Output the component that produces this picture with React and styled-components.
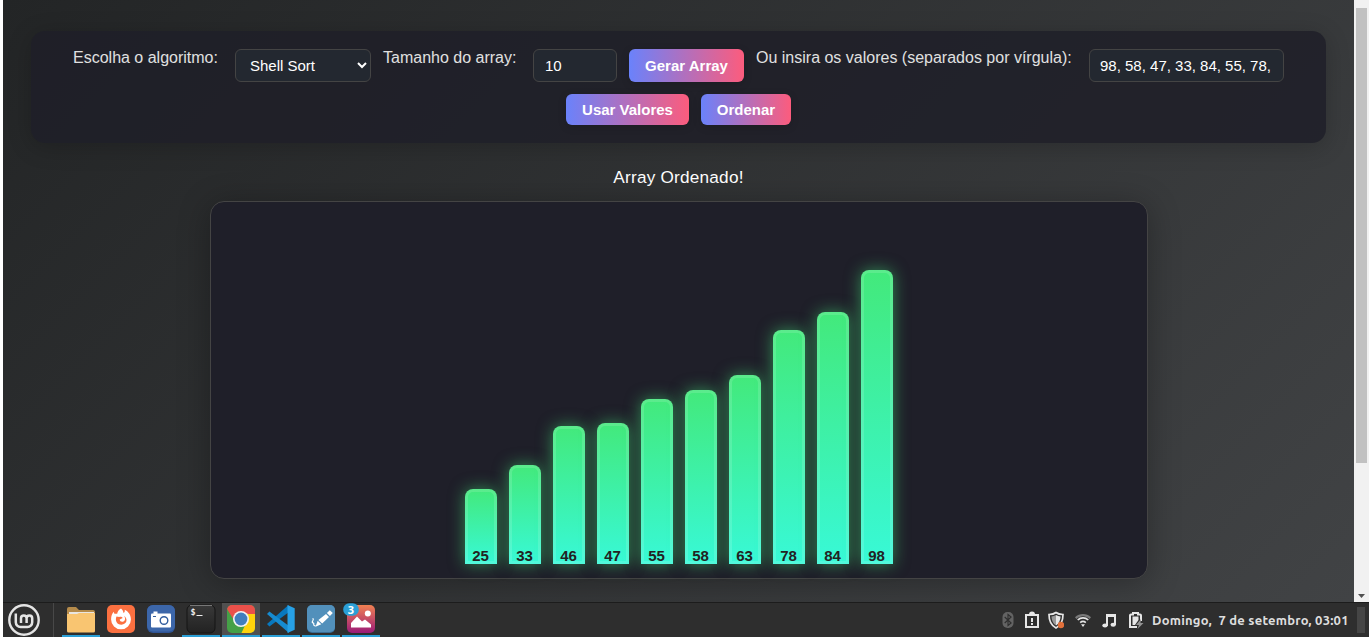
import React from "react";
import styled, { createGlobalStyle } from "styled-components";

const GlobalStyle = createGlobalStyle`
  *, *::before, *::after { box-sizing: border-box; }
  body {
    margin: 0;
    background: #fff;
    overflow: hidden;
    font-family: "Liberation Sans", Arial, sans-serif;
  }
`;

const Desktop = styled.div`
  display: flex;
  flex-direction: column;
  height: 637px;
  padding-left: 3px;
  overflow: hidden;
`;

const Browser = styled.div`
  display: flex;
  height: 602px;
`;

const Page = styled.main`
  flex: 1;
  display: flex;
  flex-direction: column;
  align-items: center;
  padding: 31px 28px 0;
  overflow: hidden;
  background: linear-gradient(135deg, #232526, #414345) 0 0 / 100% 602px;
`;

const Controls = styled.section`
  display: flex;
  flex-wrap: wrap;
  justify-content: center;
  gap: 12px;
  width: 1295px;
  height: 112px;
  padding: 18px 24px;
  border-radius: 14px;
  background: rgba(30, 30, 40, 0.85);
  box-shadow: 0 4px 24px rgba(0, 0, 0, 0.2);
`;

const Label = styled.label`
  width: ${(p) => p.$width}px;
  margin-right: 5px;
  color: #e0e0e0;
  font-size: 16px;
  line-height: 18px;
  white-space: nowrap;
`;

const fieldLook = `
  height: 33px;
  border: 1px solid #444;
  border-radius: 6px;
  background: #232830;
  color: #fff;
  font: 15px "Liberation Sans", Arial, sans-serif;
  outline: none;
`;

const Select = styled.select`
  ${fieldLook}
  width: 136px;
  padding: 0 0 0 10px;
`;

const Input = styled.input`
  ${fieldLook}
  width: ${(p) => p.$width}px;
  padding: 0 10px 0 ${(p) => p.$inset || 10}px;
`;

const Button = styled.button`
  width: ${(p) => p.$width}px;
  height: ${(p) => p.$height || 31}px;
  padding: 0;
  border: 0;
  border-radius: 6px;
  background: linear-gradient(90deg, #6a82fb, #fc5c7d);
  box-shadow: 0 2px 8px rgba(0, 0, 0, 0.15);
  color: #fff;
  font: bold 15px "Liberation Sans", Arial, sans-serif;
`;

const Status = styled.p`
  margin: 24px 0 14px;
  color: #fff;
  font-size: 17.2px;
  letter-spacing: 0.22px;
  line-height: 20px;
`;

const Chart = styled.section`
  display: flex;
  justify-content: center;
  align-items: flex-end;
  gap: 12px;
  width: 938px;
  height: 378px;
  flex-shrink: 0;
  padding-bottom: 14px;
  border: 1px solid #444;
  border-radius: 14px;
  background: #1f1f29;
  box-shadow: 0 4px 32px rgba(0, 0, 0, 0.3);
`;

const Bar = styled.div`
  display: flex;
  justify-content: center;
  align-items: flex-end;
  width: 32px;
  height: ${(p) => p.$value * 3}px;
  border-radius: 8px 8px 0 0;
  background: linear-gradient(180deg, #43e97b, #38f9d7);
  box-shadow: 0 0 16px rgba(67, 233, 123, 0.53), inset 0 0 0 3px rgba(255, 255, 255, 0.13);
  color: #222;
  font-size: 15px;
  font-weight: bold;
  line-height: 17px;
`;

const ScrollTrack = styled.div`
  display: flex;
  flex-direction: column;
  justify-content: space-between;
  align-items: center;
  width: 15px;
  padding: 8px 0 4px;
  background: #f1f1f1;
`;

const ScrollThumb = styled.div`
  width: 11px;
  height: 455px;
  background: #c1c1c1;
`;

const Taskbar = styled.footer`
  display: flex;
  height: 35px;
  border-top: 1px solid #1c1c1c;
  background: #2e2e2e;
`;

const Menu = styled.div`
  display: flex;
  align-items: center;
  width: 51px;
  padding: 0 0 0 5px;
  border-right: 1px solid #484848;
`;

const Apps = styled.nav`
  display: flex;
  gap: 2px;
  margin-left: 8px;
`;

const TaskItem = styled.div`
  display: flex;
  justify-content: center;
  width: 38px;
  padding-top: 1px;
  border-bottom: 2px solid ${(p) => (p.$open ? "#2a9fd6" : "transparent")};
  background: ${(p) => (p.$active ? "#505050" : "transparent")};
  background-clip: padding-box;
`;

const Tray = styled.div`
  display: flex;
  align-items: center;
  margin-left: auto;
`;

const TrayIcon = styled.svg`
  width: 16px;
  height: 18px;
  margin-right: ${(p) => p.$gap}px;
`;

const Clock = styled.time`
  width: 205px;
  color: #dedede;
  font: bold 13px Ubuntu, "Noto Sans", sans-serif;
  letter-spacing: 0.22px;
  white-space: pre;
`;

const ShowDesktop = styled.div`
  width: 8px;
  height: 26px;
  margin-right: 4px;
  background: #454545;
`;

const IconSvg = styled.svg`
  width: 30px;
  height: 30px;
  flex-shrink: 0;
  overflow: visible;
`;

const AppIcon = ({ children }) => <IconSvg viewBox="0 0 30 30">{children}</IconSvg>;

const MintLogo = () => (
  <svg width="32" height="32" viewBox="0 0 32 32" fill="none" stroke="#e4e4e4">
    <circle cx="16" cy="16" r="14.7" strokeWidth="2.4" />
    <path d="M7.8 9.5v8.8a4.7 4.7 0 0 0 4.7 4.7h7a4.7 4.7 0 0 0 4.7-4.7v-4a2.8 2.8 0 0 0-5.6 0v4.7m0-4.7a2.8 2.8 0 0 0-5.6 0v4.7" strokeWidth="2.5" />
  </svg>
);

const Folder = () => (
  <AppIcon>
    <path d="M1 5a2 2 0 0 1 2-2h7l3 3h14a2 2 0 0 1 2 2v8H1z" fill="#b58b4b" />
    <path d="M3 8h25v5H3z" fill="#e9e6e2" />
    <path d="M1 10h10l2-1h16v18a1.5 1.5 0 0 1-1.5 1.5h-25A1.5 1.5 0 0 1 1 27z" fill="#f9c571" />
  </AppIcon>
);

const Firefox = () => (
  <AppIcon>
    <rect x="1" y="1" width="28" height="28" rx="5" fill="#fb7040" />
    <path d="M15 4.5c1.5 1.2 2.3 2.6 2.5 4.5 1.2-.6 1.5-1.8 1.2-3.2 3.7 1.7 6.2 5.2 6.2 9.6a9.9 9.9 0 0 1-19.8 0c0-3.3 1-5.8 2.6-7.6l.7 1.9 2.8.1c.3-2.3 1.5-4.2 3.8-5.3z" fill="#fff" />
    <path d="M10.5 12.5l2.8.4c1.8-.2 3 .3 3.4 1l-3 1.7c.2 2.6 3.6 2.9 4.9.9 1-1.6.4-3.2-.6-4.4 4.3 2.6 3 8.6-2.6 8.6-4.7 0-6.6-4.3-4.9-8.2z" fill="#fb7040" />
  </AppIcon>
);

const Camera = () => (
  <AppIcon>
    <rect x="1" y="1" width="28" height="28" rx="6" fill="#2e5394" />
    <rect x="1" y="1" width="28" height="26.5" rx="6" fill="#3c66a9" />
    <path d="M7.5 7.5h4v3h-4z" fill="#fff" />
    <rect x="5" y="9.5" width="20" height="14" rx="1" fill="#fff" />
    <circle cx="18" cy="16.5" r="3.8" fill="#fff" stroke="#315c9d" strokeWidth="1.4" />
    <path d="M7 12.5h3" stroke="#315c9d" />
  </AppIcon>
);

const Terminal = () => (
  <AppIcon>
    <defs>
      <linearGradient id="term" x2="0" y2="1">
        <stop stopColor="#393939" /><stop offset="1" stopColor="#222" />
      </linearGradient>
    </defs>
    <rect x="1" y="1" width="28" height="28" rx="5" fill="url(#term)" stroke="#141414" />
    <path d="M4 1.5h22" stroke="#777" />
    <text x="4.5" y="11" fill="#eee" fontFamily="DejaVu Sans Mono" fontWeight="bold" fontSize="8.5">$</text>
    <path d="M10.5 11.5h6" stroke="#eee" />
  </AppIcon>
);

const Chrome = () => (
  <AppIcon>
    <defs><clipPath id="tile"><rect x="1" y="1" width="28" height="28" rx="5" /></clipPath></defs>
    <g clipPath="url(#tile)">
      <path d="M0 0h30v30H0z" fill="#45a047" />
      <path d="M22 15L15 30h15V8H15z" fill="#ffd20c" />
      <path d="M1 0h29v10H15a7 7 0 0 0-6 8L1 5z" fill="#ea504a" />
    </g>
    <circle cx="15" cy="15" r="8" fill="#f2f2f2" />
    <circle cx="15" cy="15" r="6.4" fill="#427ebd" />
  </AppIcon>
);

const Code = () => (
  <AppIcon>
    <path d="M22.5 1L1 20l2.4 2.6L23 8z" fill="#0878be" />
    <path d="M1 10l2.4-2.6L23 22v7z" fill="#168bd1" />
    <path d="M21.5 1l7.2 3.2v21.6L21.5 29z" fill="#27a1e6" />
  </AppIcon>
);

const Pen = () => (
  <AppIcon>
    <rect x="1" y="1" width="28" height="28" rx="5" fill="#386d96" />
    <rect x="1" y="1" width="28" height="27" rx="5" fill="#5290bb" />
    <path d="M23.8 6.2l3 2.8-2.9 3-3-2.9zM20 10l3 3-6.8 6.6-3.8-3.7zM11.7 16.7l3.6 3.5-5.8 2.6z" fill="#fff" />
    <path d="M6.5 14.5c1.5 0 .4 2-.2 3.3-.5 1.5 2 .6 1.5 2.2-.3 1 .2 1.8 2 2" fill="none" stroke="#fff" strokeWidth="1.2" />
  </AppIcon>
);

const Photos = () => (
  <AppIcon>
    <defs>
      <linearGradient id="photo" x2="0" y2="1">
        <stop stopColor="#f18152" /><stop offset="1" stopColor="#9b1a78" />
      </linearGradient>
    </defs>
    <rect x="1" y="1" width="28" height="28" rx="5" fill="url(#photo)" />
    <circle cx="21.8" cy="9.5" r="3" fill="#fff" />
    <path d="M5 23.5V19l6-6.5 5 5 3-2 6 5v3z" fill="#fff" />
    <rect x="-2.8" y="-0.8" width="15.6" height="12.6" rx="6" fill="#2a9fd6" />
    <text x="5" y="9.5" textAnchor="middle" fill="#fff" fontFamily="Noto Sans" fontWeight="bold" fontSize="11">3</text>
  </AppIcon>
);

const apps = [
  { Icon: Folder, open: true },
  { Icon: Firefox },
  { Icon: Camera },
  { Icon: Terminal, open: true },
  { Icon: Chrome, open: true, active: true },
  { Icon: Code, open: true },
  { Icon: Pen, open: true },
  { Icon: Photos, open: true },
];

const values = [25, 33, 46, 47, 55, 58, 63, 78, 84, 98];

const TrayIcons = () => (
  <>
    <TrayIcon viewBox="0 0 16 18" $gap={8}>
      <rect x="2.5" y="1" width="11" height="16" rx="5" fill="#636363" />
      <path d="M4.7 6l6.4 6L8 14.5v-11L11.1 6l-6.4 6" fill="none" stroke="#2e2e2e" strokeWidth="1.1" />
    </TrayIcon>
    <TrayIcon viewBox="0 0 16 18" $gap={8}>
      <path d="M2 4h12v12H2z" fill="none" stroke="#e6e6e6" strokeWidth="2" />
      <path d="M5 3.5a3 3 0 0 1 6 0V5H5z" fill="#e6e6e6" />
      <path d="M8 7v4m0 1v2" stroke="#e6e6e6" strokeWidth="2" />
    </TrayIcon>
    <TrayIcon viewBox="0 0 16 18" $gap={11}>
      <path d="M8 1.5c2 1.6 4.2 2 7 2 0 6-2 11-7 13.5C3 14.5 1 9.5 1 3.5c2.8 0 5-.4 7-2z" fill="none" stroke="#e6e6e6" strokeWidth="1.7" />
      <path d="M8 4c-1.3.9-3 1.4-4.6 1.5C3.7 9.5 5 12.7 8 14.5z" fill="#989898" />
      <path d="M8 4c1.3.9 3 1.4 4.6 1.5C12.3 9.5 11 12.7 8 14.5z" fill="#e6e6e6" />
      <circle cx="13" cy="14" r="3.2" fill="#e1703b" />
    </TrayIcon>
    <TrayIcon viewBox="0 0 16 18" $gap={10}>
      <path d="M0 6.3C4.5 2 11.5 2 16 6.3l-1.4 1.6C10.5 4.4 5.5 4.4 1.4 7.9z" fill="#7a7a7a" />
      <path d="M2.7 9c3-2.8 7.6-2.8 10.6 0M5.2 11.6c1.7-1.5 3.9-1.5 5.6 0" fill="none" stroke="#e6e6e6" strokeWidth="1.7" />
      <path d="M6 13.3h4L8 16z" fill="#e6e6e6" />
    </TrayIcon>
    <TrayIcon viewBox="0 0 16 18" $gap={11}>
      <path d="M5 3h10v11h-2V6H7v9H5z" fill="#e6e6e6" />
      <ellipse cx="4" cy="14.5" rx="2.7" ry="2" fill="#e6e6e6" />
      <ellipse cx="12.2" cy="13.7" rx="2.7" ry="2" fill="#e6e6e6" />
    </TrayIcon>
    <TrayIcon viewBox="0 0 16 18" $gap={8}>
      <path d="M2 4.5a1 1 0 0 1 1-1h2V2h5v1.5h2a1 1 0 0 1 1 1V10M9 16H2V4.5" fill="none" stroke="#e6e6e6" strokeWidth="2" />
      <path d="M4.5 7V5.5h6V9L7 14H4.5z" fill="#e6e6e6" />
      <path d="M13 8l-5 6h3l-1.5 4 6-6h-3z" fill="#929292" />
    </TrayIcon>
  </>
);

export default function App() {
  return (
    <Desktop>
      <GlobalStyle />
      <Browser>
        <Page>
          <Controls>
            <Label $width={145}>Escolha o algoritmo:</Label>
            <Select defaultValue="shell"><option value="shell">Shell Sort</option></Select>
            <Label $width={133}>Tamanho do array:</Label>
            <Input type="number" $width={84} $inset={11} defaultValue="10" />
            <Button $width={115} $height={33}>Gerar Array</Button>
            <Label $width={316}>Ou insira os valores (separados por vírgula):</Label>
            <Input type="text" $width={195} defaultValue="98, 58, 47, 33, 84, 55, 78," />
            <Button $width={123}>Usar Valores</Button>
            <Button $width={90}>Ordenar</Button>
          </Controls>
          <Status>Array Ordenado!</Status>
          <Chart>
            {values.map((v) => <Bar key={v} $value={v}>{v}</Bar>)}
          </Chart>
        </Page>
        <ScrollTrack>
          <ScrollThumb />
          <svg width="7" height="4" viewBox="0 0 7 4"><path d="M0 0h7L3.5 4z" fill="#505050" /></svg>
        </ScrollTrack>
      </Browser>
      <Taskbar>
        <Menu><MintLogo /></Menu>
        <Apps>
          {apps.map(({ Icon, open, active }, i) => (
            <TaskItem key={i} $open={open} $active={active}><Icon /></TaskItem>
          ))}
        </Apps>
        <Tray>
          <TrayIcons />
          <Clock>Domingo,  7 de setembro, 03:01</Clock>
          <ShowDesktop />
        </Tray>
      </Taskbar>
    </Desktop>
  );
}
